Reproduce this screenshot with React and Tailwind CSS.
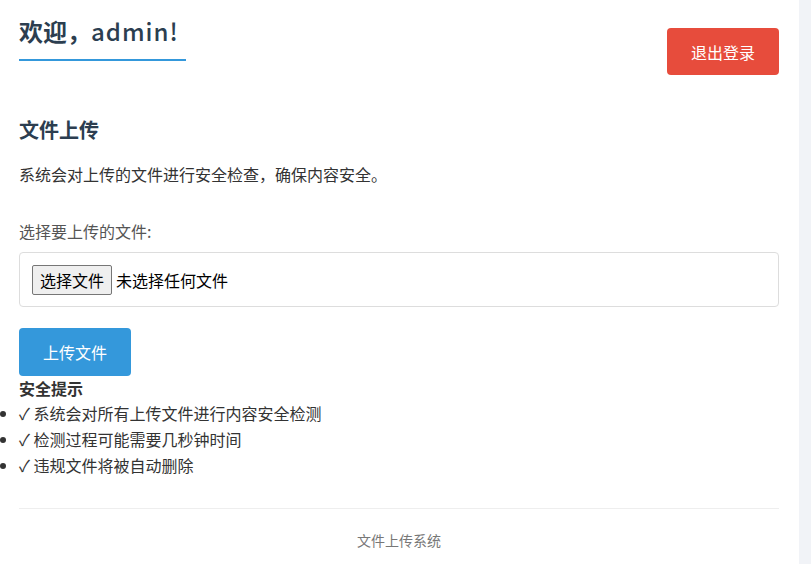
function Header() {
  return (
    <div className="flex items-start justify-between">
      <h1 className="mt-[16px] border-b-2 border-[#3498db] pb-[13px] pr-[7px] text-[24px] font-bold leading-[30px] text-[#2c3e50]">
        欢迎，<span className="font-medium tracking-[1px]">admin!</span>
      </h1>
      <button className="mt-[28px] h-[47px] w-[112px] rounded-[4px] bg-[#e74c3c] text-[16px] text-white">
        退出登录
      </button>
    </div>
  );
}

function UploadSection() {
  return (
    <div>
      <h2 className="mt-[41px] text-[20px] font-bold leading-[28px] text-[#2c3e50]">
        文件上传
      </h2>
      <p className="mt-[18px] text-[16px] leading-[24px] text-[#333]">
        系统会对上传的文件进行安全检查，确保内容安全。
      </p>
      <div className="mt-[33px] text-[16px] leading-[24px] text-[#555]">
        选择要上传的文件:
      </div>
      <div className="mt-[9px] flex h-[55px] items-center rounded-[4px] border border-[#ddd] px-[12px]">
        <span className="flex h-[30px] items-center rounded-[2px] border border-[#767676] bg-[#efefef] px-[7px] text-[16px] text-black">
          选择文件
        </span>
        <span className="ml-[4px] text-[16px] text-black">未选择任何文件</span>
      </div>
      <button className="mt-[21px] h-[48px] w-[112px] rounded-[4px] bg-[#3498db] text-[16px] text-white">
        上传文件
      </button>
    </div>
  );
}

function Tips() {
  const items = [
    '✓ 系统会对所有上传文件进行内容安全检测',
    '✓ 检测过程可能需要几秒钟时间',
    '✓ 违规文件将被自动删除',
  ];
  return (
    <div className="text-[#333]">
      <div className="text-[16px] font-bold leading-[24px]">安全提示</div>
      <ul className="list-outside list-disc text-[16px] leading-[26px]">
        {items.map((t) => (
          <li key={t}>{t}</li>
        ))}
      </ul>
    </div>
  );
}

export default function App() {
  return (
    <div className="flex min-h-screen bg-[#f1f3f7] font-['Noto_Sans_CJK_SC',sans-serif]">
      <div className="w-[799px] bg-white pl-[19px] pr-[20px]">
        <Header />
        <UploadSection />
        <Tips />
        <div className="mt-[30px] border-t border-[#eee] pt-[21px] pb-[14px] text-center text-[14px] leading-[20px] text-[#777]">
          文件上传系统
        </div>
      </div>
    </div>
  );
}
